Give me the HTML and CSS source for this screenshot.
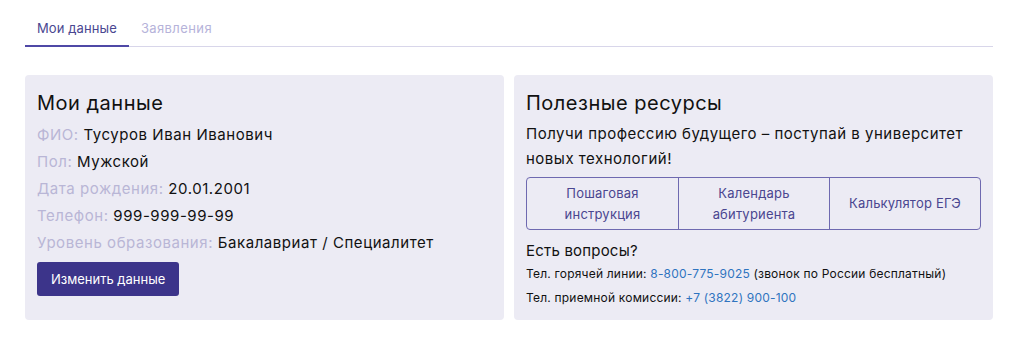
FILE: index.html
```html
<!DOCTYPE html>
<html lang="ru">
<head>
<meta charset="utf-8">
<link rel="stylesheet" href="styles.css">
</head>
<body>
<div class="page">
  <nav class="tabs">
    <a class="tab active">Мои данные</a>
    <a class="tab">Заявления</a>
  </nav>
  <div class="cards">
    <section class="card">
      <h2 class="card-title">Мои данные</h2>
      <ul class="fields">
        <li><span class="label">ФИО:</span> Тусуров Иван Иванович</li>
        <li><span class="label">Пол:</span> Мужской</li>
        <li><span class="label">Дата рождения:</span> 20.01.2001</li>
        <li><span class="label">Телефон:</span> 999-999-99-99</li>
        <li><span class="label">Уровень образования:</span> Бакалавриат / Специалитет</li>
      </ul>
      <button class="btn">Изменить данные</button>
    </section>
    <section class="card">
      <h2 class="card-title">Полезные ресурсы</h2>
      <p class="lead">Получи профессию будущего – поступай в университет новых технологий!</p>
      <div class="links">
        <a class="link-cell">Пошаговая<br>инструкция</a>
        <a class="link-cell">Календарь<br>абитуриента</a>
        <a class="link-cell">Калькулятор ЕГЭ</a>
      </div>
      <h3 class="sub-title">Есть вопросы?</h3>
      <p class="contact">Тел. горячей линии: <a class="phone">8-800-775-9025</a> (звонок по России бесплатный)</p>
      <p class="contact">Тел. приемной комиссии: <a class="phone">+7 (3822) 900-100</a></p>
    </section>
  </div>
</div>
</body>
</html>
```
FILE: styles.css
```css
* { box-sizing: border-box; }
html, body { margin: 0; padding: 0; background: #fff; }
body {
  font-family: "Inter", "Noto Sans", sans-serif;
  color: #16161e;
}
.page {
  padding: 18px 30px 0 25px;
}
.tabs {
  display: flex;
  border-bottom: 1px solid #d8d6ea;
  height: 29px;
}
.tab {
  padding: 0 12px;
  font-size: 13px;
  line-height: 20px;
  color: #b6b3da;
  letter-spacing: 0.1px;
  cursor: pointer;
}
.tab + .tab { letter-spacing: 0.4px; }
.tab.active {
  color: #4a4791;
  border-bottom: 2px solid #4f48a6;
  height: 29px;
  margin-bottom: -1px;
}
.cards {
  display: grid;
  grid-template-columns: 1fr 1fr;
  gap: 10px;
  margin-top: 28px;
}
.card {
  background: #ecebf4;
  border-radius: 4px;
  padding: 14px 12px 10px;
}
.card-title {
  margin: 0 0 4px;
  font-size: 20px;
  font-weight: 400;
  line-height: 28px;
  letter-spacing: 0.5px;
  color: #111;
}
.fields {
  list-style: none;
  margin: 0;
  padding: 0;
}
.fields li {
  font-size: 15px;
  line-height: 27px;
  letter-spacing: 0.55px;
  color: #111;
}
.label { color: #b9b6d6; }
.btn {
  margin-top: 6px;
  background: #3c348a;
  color: #fff;
  border: none;
  border-radius: 3px;
  font-family: inherit;
  font-size: 13px;
  height: 34px;
  padding: 0 14px;
}
.lead {
  margin: 0;
  font-size: 15px;
  line-height: 25px;
  letter-spacing: 0.5px;
  color: #111;
}
.links {
  display: grid;
  grid-template-columns: repeat(3, 1fr);
  border: 1px solid #6e69b0;
  border-radius: 4px;
  margin-top: 6px;
  height: 53px;
}
.link-cell {
  display: flex;
  align-items: center;
  justify-content: center;
  text-align: center;
  font-size: 13px;
  line-height: 21px;
  letter-spacing: 0.2px;
  color: #4a4690;
}
.link-cell + .link-cell { border-left: 1px solid #6e69b0; }
.sub-title {
  margin: 10px 0 0;
  font-size: 15px;
  font-weight: 400;
  line-height: 22px;
  letter-spacing: 0.2px;
  color: #111;
}
.contact {
  margin: 0;
  font-size: 12px;
  line-height: 24px;
  letter-spacing: 0.2px;
  color: #111;
}
.phone { color: #2f74c0; }
```
